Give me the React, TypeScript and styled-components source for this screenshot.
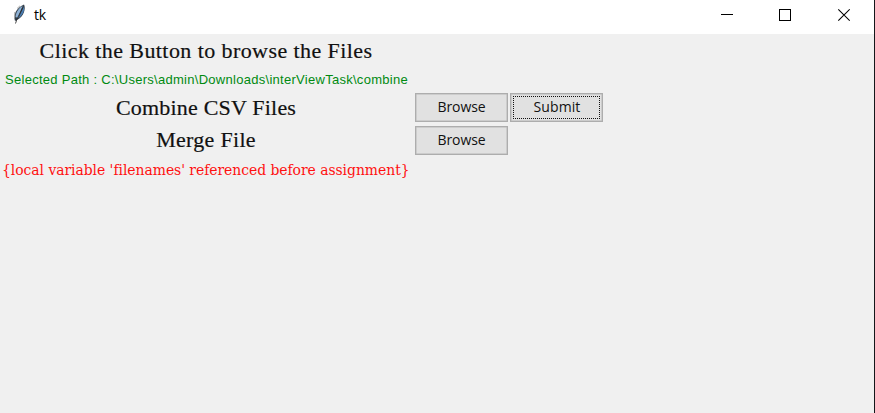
import React from "react";
import styled, { createGlobalStyle } from "styled-components";

const GlobalStyle = createGlobalStyle`
  body { margin: 0; overflow: hidden; background: #f0f0f0; }
  * { box-sizing: border-box; }
`;

const Window = styled.main`
  width: 875px;
  height: 413px;
  display: flex;
  flex-direction: column;
  background: #f0f0f0;
  border-right: 1px solid #14171a;
`;

const TitleBar = styled.header`
  height: 34px;
  flex: none;
  display: flex;
  align-items: flex-start;
  padding-right: 1px;
  background: #fff;
`;

const FeatherIcon = styled.svg`
  width: 14px;
  height: 22px;
  margin: 3px 9px 0 12px;
`;

const Title = styled.span`
  flex: 1;
  padding-top: 6px;
  margin-left: -1px;
  font: 14px/18px "Open Sans", "Noto Sans", sans-serif;
  letter-spacing: -0.3px;
  color: #000;
`;

const ControlButton = styled.button`
  width: 58px;
  height: 30px;
  padding: 0 2px 0 0;
  border: 0;
  background: none;
  display: flex;
  justify-content: center;
  svg { display: block; }
`;

const Form = styled.section`
  display: grid;
  grid-template-columns: 412px 93px 93px;
  grid-template-rows: 33px 24px 33px 32px 28px;
  column-gap: 2.5px;
  align-items: center;
`;

const Label = styled.div<{ $spacing: number }>`
  grid-column: 1;
  text-align: center;
  white-space: nowrap;
  font: 22px/26px "Liberation Serif", serif;
  letter-spacing: ${(p) => p.$spacing}px;
  -webkit-text-stroke: 0.2px #111;
  color: #111;
`;

const PathText = styled.div`
  grid-column: 1;
  padding: 2px 0 0 5px;
  white-space: nowrap;
  font: 13px/16px "Liberation Sans", sans-serif;
  letter-spacing: 0.28px;
  color: #008a10;
`;

const ErrorText = styled.div`
  grid-column: 1;
  padding-left: 2px;
  white-space: nowrap;
  font: 15.5px/20px "DejaVu Serif Condensed", "DejaVu Serif", serif;
  font-stretch: condensed;
  letter-spacing: -0.05px;
  color: #ff1010;
`;

const PushButton = styled.button<{ $focused?: boolean }>`
  height: 29px;
  padding: 0 0 1px 1px;
  border: 1px solid #adadad;
  box-shadow: inset 0 0 0 0.5px #b8b8b8;
  background: #e1e1e1;
  font: 14px/18px "Open Sans", "Noto Sans", sans-serif;
  letter-spacing: ${(p) => (p.$focused ? "0.1px" : "-0.1px")};
  color: #111;
  outline: ${(p) => (p.$focused ? "1px dotted #111" : "none")};
  outline-offset: -4px;
`;

export default function App() {
  return (
    <>
      <GlobalStyle />
      <Window>
        <TitleBar>
          <FeatherIcon viewBox="0 0 14 22">
            <path d="M3 18C1 12 4 5 12 1.5C14 5 12 14 5 17Z" fill="#34414d" />
            <path d="M3.6 14C3.8 9 7 5 10.5 3L6 15Z" fill="#8fb2d6" />
            <path d="M6.5 15.2L11.7 4C13 7 11 12 6.5 15.2Z" fill="#4a7db3" />
            <path d="M10.5 5L5 16L3.5 20.5" fill="none" stroke="#222" strokeWidth="0.8" />
            <path d="M2.8 9L2.6 15M8 2.8L5 5.5" fill="none" stroke="#a7a7a7" strokeWidth="0.9" />
          </FeatherIcon>
          <Title>tk</Title>
          <ControlButton aria-label="Minimize">
            <svg width="12" height="30"><path d="M0 14.5H12" stroke="#000" /></svg>
          </ControlButton>
          <ControlButton aria-label="Maximize">
            <svg width="12" height="30"><rect x=".5" y="9.5" width="11" height="11" fill="none" stroke="#000" /></svg>
          </ControlButton>
          <ControlButton aria-label="Close">
            <svg width="13" height="30"><path d="M1.3 9.3L12.7 20.7M12.7 9.3L1.3 20.7" stroke="#000" strokeWidth="1.1" /></svg>
          </ControlButton>
        </TitleBar>
        <Form>
          <Label $spacing={0.42}>Click the Button to browse the Files</Label>
          <PathText>Selected Path : C:\Users\admin\Downloads\interViewTask\combine</PathText>
          <Label $spacing={0.2}>Combine CSV Files</Label>
          <PushButton>Browse</PushButton>
          <PushButton $focused>Submit</PushButton>
          <Label $spacing={0.3}>Merge File</Label>
          <PushButton>Browse</PushButton>
          <ErrorText>{"{local variable 'filenames' referenced before assignment}"}</ErrorText>
        </Form>
      </Window>
    </>
  );
}
